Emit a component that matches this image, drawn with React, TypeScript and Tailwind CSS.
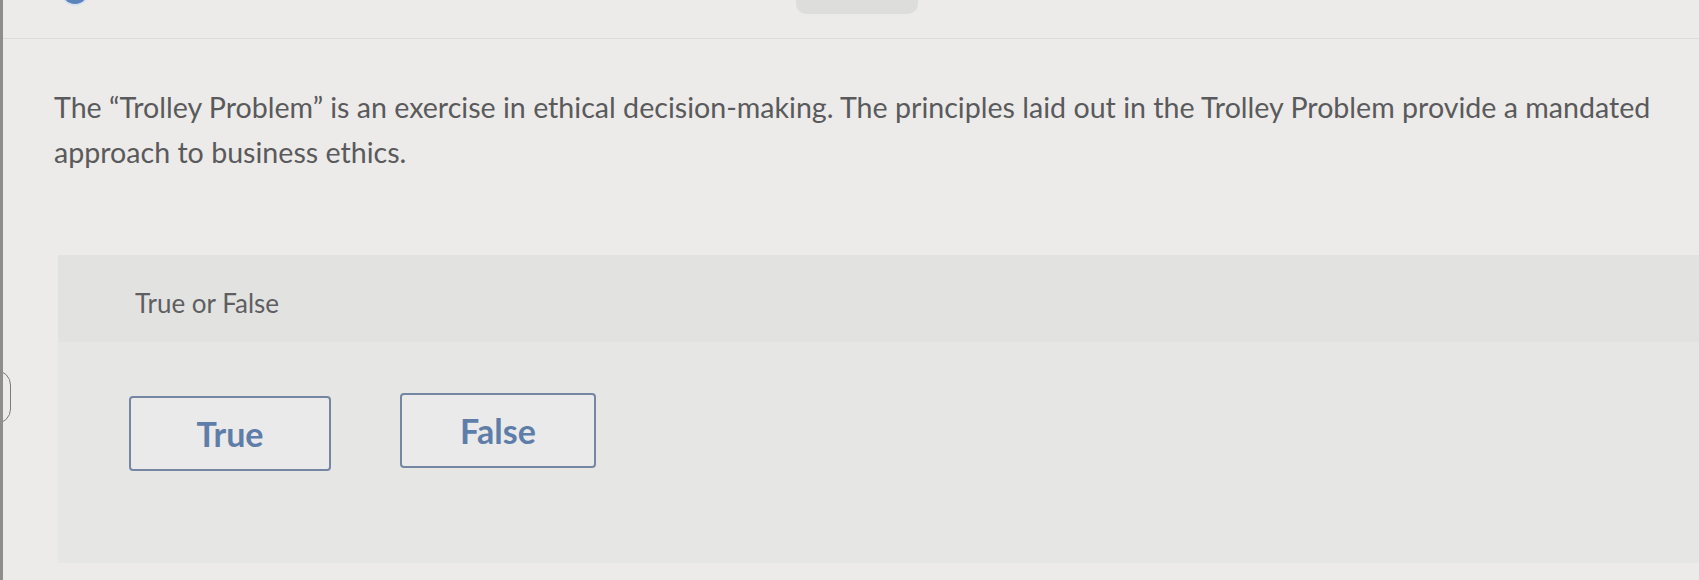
import React from 'react';

const font = { fontFamily: '"Lato", "Open Sans", sans-serif' };

export default function App() {
    return (
        <div
            className="relative w-[1699px] h-[580px] overflow-hidden bg-[#ecebe9] border-l-[3px] border-[#8d8d8b] text-[#5b5b5d]"
            style={font}
        >
            {/* top bar */}
            <div className="flex h-[39px] items-start border-b border-[#dcdcda]">
                <div className="ml-[57px] -mt-[24px] h-[30px] w-[30px] rounded-full bg-[#5b84bd] border-2 border-[#d8e2ef]" />
                <div className="ml-[706px] h-[14px] w-[122px] rounded-b-[10px] bg-[#dddddb]" />
            </div>

            {/* left edge arc */}
            <div className="absolute -left-[22px] top-[370px] h-[54px] w-[30px] rounded-full border-[1.5px] border-[#7a7a78]" />

            {/* question */}
            <p className="mt-[46px] ml-[51px] mr-[20px] text-[28.6px] leading-[45px] text-[#5a5a5c]">
                The “Trolley Problem” is an exercise in ethical decision-making. The principles laid out in the Trolley Problem provide a mandated approach to business ethics.
            </p>

            {/* answer panel */}
            <div className="mt-[80px] ml-[55px] h-[308px] bg-[#e6e6e5]">
                <div className="flex h-[87px] items-center bg-[#e2e2e1] pl-[77px] pt-[10px]">
                    <span className="text-[26px] text-[#5f5f61]">True or False</span>
                </div>
                <div className="flex items-start pt-[51px] pl-[71px]">
                    <button className="mt-[3px] flex h-[75px] w-[202px] items-center justify-center rounded-[4px] border-2 border-[#7586a3] bg-[#eaeaea] text-[34px] font-bold text-[#5f7da9]">
                        True
                    </button>
                    <button className="ml-[69px] flex h-[75px] w-[196px] items-center justify-center rounded-[4px] border-2 border-[#7586a3] bg-[#eaeaea] text-[34px] font-bold text-[#5f7da9]">
                        False
                    </button>
                </div>
            </div>
        </div>
    );
}
